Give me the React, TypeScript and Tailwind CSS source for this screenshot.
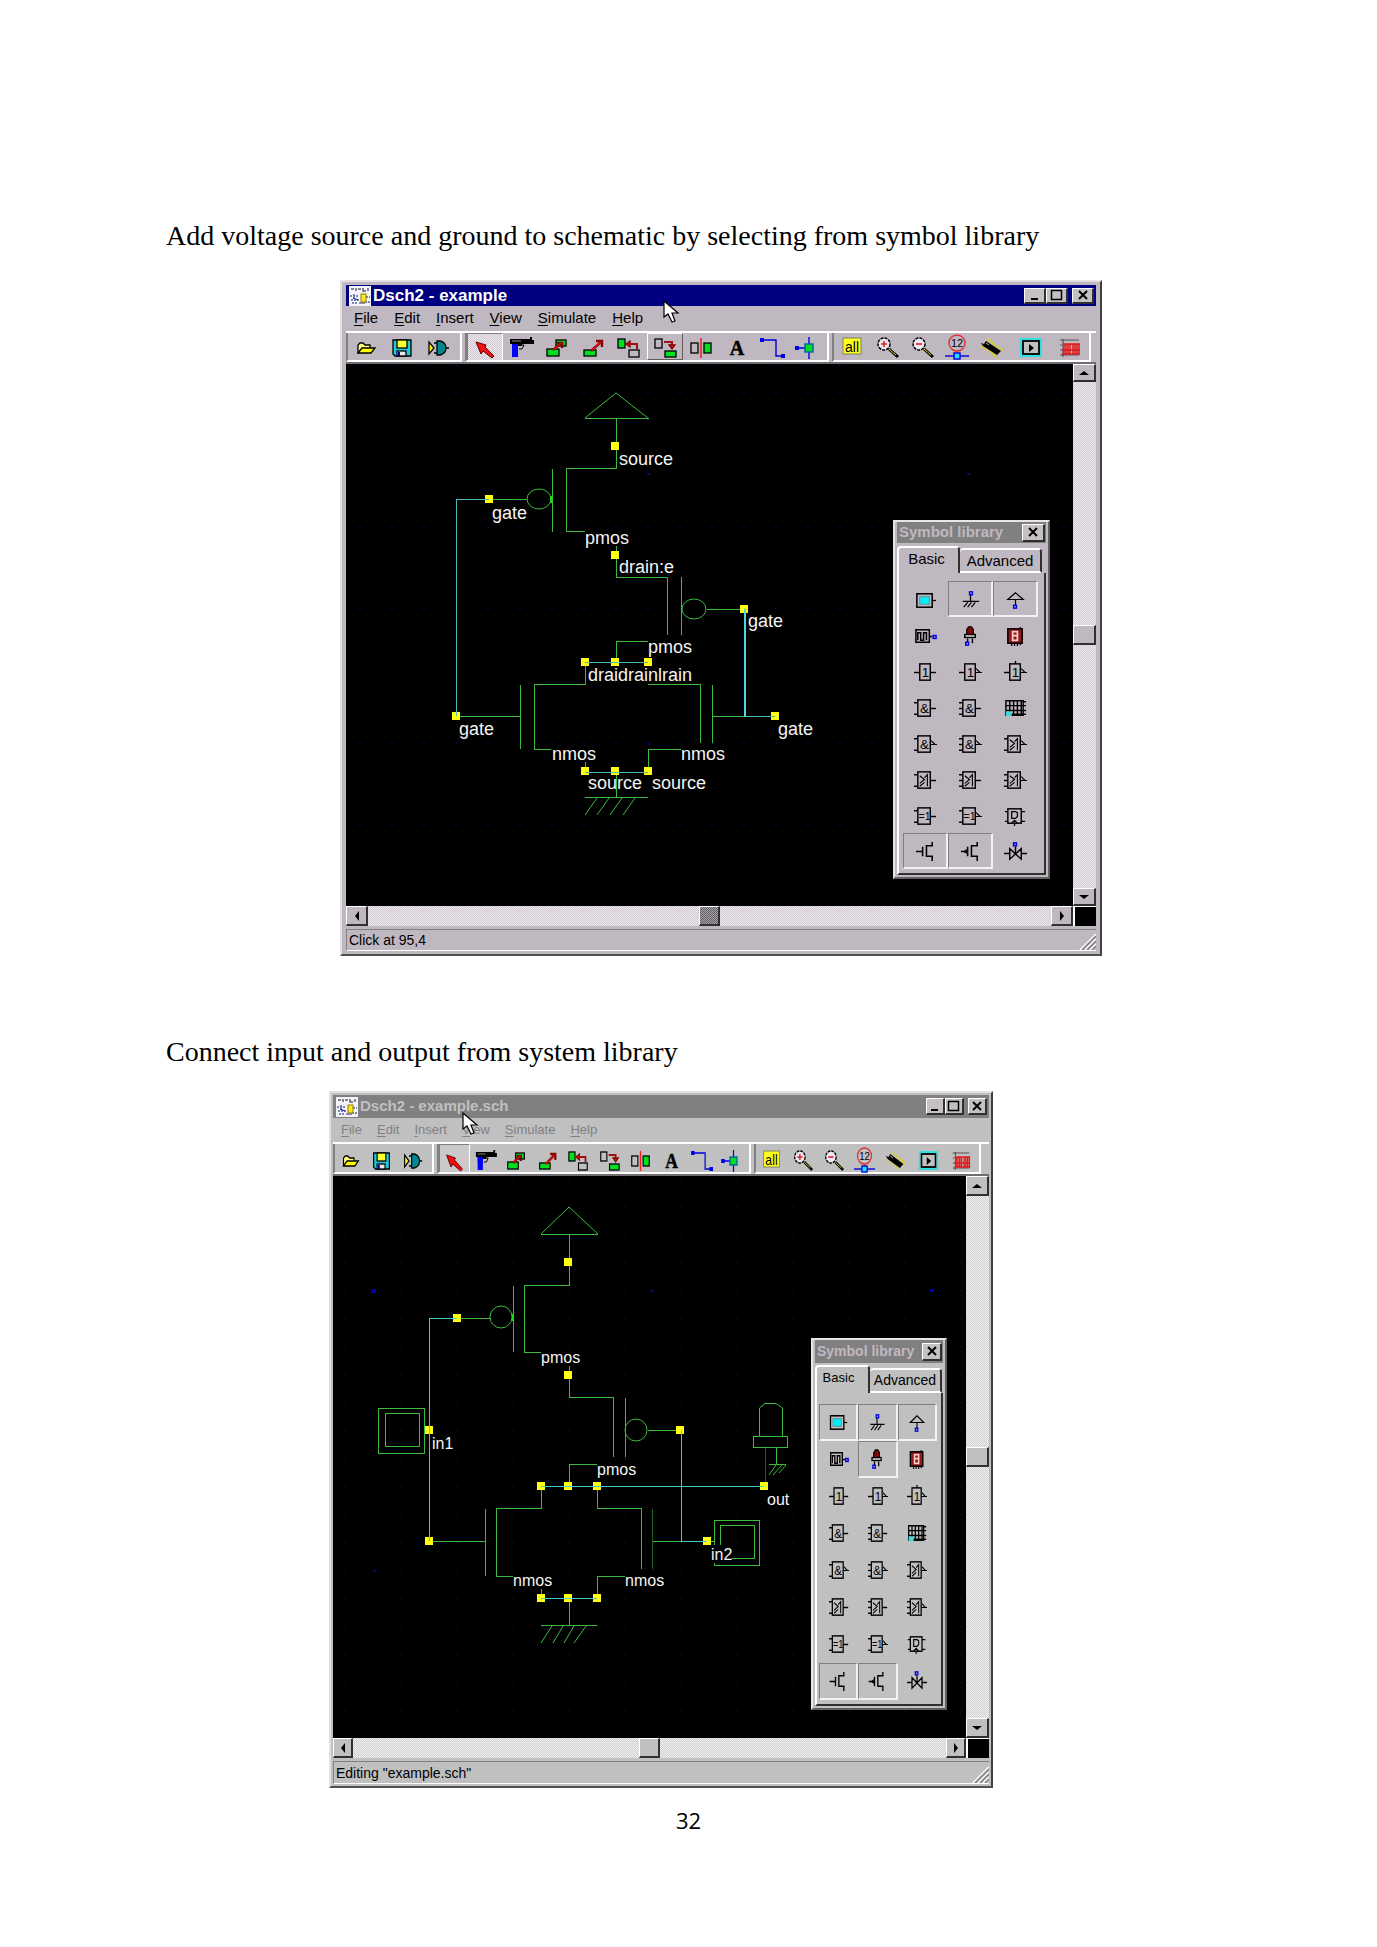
import React from "react";

type Variant = "active" | "inactive";

/* ---------- toolbar drawings ---------- */

const RED = "#d01818";
const GREEN = "#00e020";
const BLUE = "#0000e0";

const toolIcons: Record<string, React.ReactNode> = {
  open: (
    <g stroke="#000" strokeWidth="1.3">
      <path d="M-8 5V-3L-6-5H-3L-1-3H4V0" fill="#ffff80" />
      <path d="M-8 5L-4 0H9L5 5Z" fill="#ffff00" />
    </g>
  ),
  save: (
    <g stroke="#000" strokeWidth="1.3">
      <path d="M-9-8H9V8H-7L-9 6Z" fill="#20c8d8" />
      <rect x="-5" y="-8" width="10" height="8" fill="#ffff30" />
      <rect x="-5" y="3" width="9" height="5" fill="#e8e8e8" />
      <rect x="-4" y="4" width="2" height="4" fill="#008" stroke="none" />
    </g>
  ),
  simulateGate: (
    <g stroke="#000" strokeWidth="1.3">
      <path d="M-9-6L-4 0L-9 6Z" fill="#ffff20" />
      <path d="M-4-5H-1M-4 5H-1M7 0H11" />
      <path d="M-1-7H2C6-6 8-3 8 0C8 3 6 6 2 7H-1Z" fill="#008890" />
    </g>
  ),
  select: <path d="M-9-7L1-4L0-2L9 7L7 9L-2 2L-4 5Z" fill="#f01010" stroke="#600" strokeWidth="1" />,
  gun: (
    <g>
      <path d="M-11-9H9V-11H11V-8H13V-4H1V-2H-3V0H-9V-4H-11Z" fill="#000" />
      <path d="M-3-3H3L1 1H-2" fill="none" stroke="#000" />
      <path d="M-9-4H-3V9H-9Z" fill="#0000ff" />
      <path d="M-9-7H0" stroke="#888" />
    </g>
  ),
  copy: (
    <g stroke="#000" strokeWidth="1.3">
      <rect x="-1" y="-8" width="10" height="6" fill={GREEN} />
      <rect x="-10" y="1" width="12" height="7" fill={GREEN} />
      <path d="M-4 2L4-5M0-5H5V0" stroke="#800" strokeWidth="2.6" fill="none" />
      <path d="M-4 2L4-5" stroke={RED} strokeWidth="1.2" />
    </g>
  ),
  move: (
    <g stroke="#000" strokeWidth="1.3">
      <rect x="-9" y="2" width="12" height="6" fill={GREEN} />
      <path d="M-2 3L8-6M3-7H9V-1" stroke="#800" strokeWidth="2.4" fill="none" />
      <path d="M-2 3L8-6" stroke={RED} strokeWidth="1.2" />
    </g>
  ),
  rotateLeft: (
    <g stroke="#000" strokeWidth="1.3">
      <rect x="-11" y="-9" width="7" height="9" fill={GREEN} />
      <rect x="0" y="2" width="10" height="7" fill="none" />
      <path d="M8 1V-4H0" stroke="#a01010" strokeWidth="2" fill="none" />
      <path d="M-3-4L1-7V-1Z" fill={RED} stroke="#800" />
    </g>
  ),
  rotateRight: (
    <g stroke="#000" strokeWidth="1.3">
      <rect x="-10" y="-9" width="7" height="9" fill="none" />
      <rect x="0" y="3" width="11" height="6" fill={GREEN} />
      <path d="M-1-6H7V-3" stroke="#a01010" strokeWidth="2" fill="none" />
      <path d="M4-3H10L7 1Z" fill={RED} stroke="#800" />
    </g>
  ),
  mirror: (
    <g stroke="#000" strokeWidth="1.3">
      <rect x="-10" y="-5" width="7" height="10" fill="none" />
      <rect x="3" y="-5" width="7" height="10" fill={GREEN} />
      <path d="M0-10V10" stroke="#f02020" strokeWidth="1.6" />
    </g>
  ),
  text: (
    <text x="0" y="7" textAnchor="middle" fontSize="20" fontWeight="700" fontFamily="Liberation Serif, serif" fill="#000" stroke="#000" strokeWidth="0.5">
      A
    </text>
  ),
  wire: (
    <g>
      <path d="M-11-8H3V8H10" fill="none" stroke={BLUE} strokeWidth="1.4" />
      <rect x="-13" y="-10" width="4" height="4" fill={BLUE} />
      <rect x="8" y="6" width="4" height="4" fill={BLUE} />
    </g>
  ),
  node: (
    <g>
      <path d="M-13 0H4M0-11V11" stroke={BLUE} strokeWidth="1.4" />
      <rect x="-14" y="-2" width="4" height="4" fill={BLUE} />
      <rect x="-4" y="-4" width="8" height="8" fill={GREEN} stroke="#0060a0" strokeWidth="1.4" />
    </g>
  ),
  all: (
    <g>
      <rect x="-9" y="-10" width="18" height="16" fill="#ffff20" stroke="#808060" />
      <text x="0" y="4" textAnchor="middle" fontSize="14" fontFamily="Liberation Sans, sans-serif" fill="#000">
        all
      </text>
    </g>
  ),
  zoomIn: (
    <g>
      <path d="M2 1L11 9" stroke="#000" strokeWidth="3" />
      <path d="M2 1L9 7" stroke="#d8d020" strokeWidth="1" />
      <circle cx="-3" cy="-4" r="6" fill="#f0e8f0" stroke="#000" strokeWidth="1.5" strokeDasharray="3 1" />
      <path d="M-6-4H0M-3-7V-1" stroke="#e02020" strokeWidth="1.6" />
    </g>
  ),
  zoomOut: (
    <g>
      <path d="M2 1L11 9" stroke="#000" strokeWidth="3" />
      <path d="M2 1L9 7" stroke="#d8d020" strokeWidth="1" />
      <circle cx="-3" cy="-4" r="6" fill="#f0e8f0" stroke="#000" strokeWidth="1.5" strokeDasharray="3 1" />
      <path d="M-6-4H0" stroke="#e02020" strokeWidth="1.6" />
    </g>
  ),
  probe: (
    <g>
      <circle cx="0" cy="-5" r="8" fill="none" stroke="#e03030" strokeWidth="1.4" />
      <text x="0" y="-1" textAnchor="middle" fontSize="11" fontFamily="Liberation Sans, sans-serif" fill="#000">
        12
      </text>
      <path d="M0 3V6" stroke="#e03030" strokeWidth="1.4" />
      <path d="M-12 8H12" stroke={BLUE} strokeWidth="1.4" />
      <rect x="-3" y="5" width="6" height="6" fill="#20e0ff" stroke={BLUE} strokeWidth="1.4" />
    </g>
  ),
  chip: (
    <g>
      <path d="M-5-9L11 3M-10-2L5 9" stroke="#e0d000" strokeWidth="2.4" strokeDasharray="1.6 1.4" />
      <path d="M-11-5L-8-4L-6-7L9 3L5 7L-9-2Z" fill="#000" />
      <path d="M-6-5L-3-3" stroke="#bbb" />
    </g>
  ),
  play: (
    <g>
      <rect x="-10" y="-9" width="20" height="17" fill="#c0c0c0" stroke="#30e0e0" strokeWidth="2" />
      <rect x="-8" y="-7" width="16" height="13" fill="none" stroke="#000" strokeWidth="1.8" />
      <path d="M-2-4L3 0L-2 4Z" fill="#000" />
    </g>
  ),
  chart: (
    <g>
      <path d="M-7-9V9M-10-8H9M-10-3H-8M-10 2H-8M-10 7H9" stroke="#505050" strokeWidth="1.2" />
      <path d="M-6 6V-4H-4V6M-2 6V-4H0V6M3 6V-4H5V6M7 6V-4H9V6M-8 2H10M-8 6H10M-6-4H10" fill="none" stroke="#e01818" strokeWidth="1.5" />
    </g>
  ),
};

const fileTools = ["open", "save", "simulateGate"];
const editTools = ["select", "gun", "copy", "move", "rotateLeft", "rotateRight", "mirror", "text", "wire", "node"];
const viewTools = ["all", "zoomIn", "zoomOut", "probe", "chip", "play", "chart"];

/* ---------- symbol library drawings ---------- */

function Gate({ label, ins, tri, top }: { label: string; ins: number; tri?: boolean; top?: boolean }) {
  const pins = ins === 1 ? [0] : ins === 2 ? [-6, 6] : [-6, 0, 6];
  const left = label === "1" ? -6 : -8;
  return (
    <g stroke="#000" strokeWidth="1.5" fill="none">
      <rect x={left} y="-9" width={5 - left} height="17" />
      {pins.map((y) => (
        <path key={y} d={`M-12 ${y}H${left}`} />
      ))}
      {tri ? <path d="M6-4L10 0H5M10 0H12" strokeWidth="1.2" /> : <path d="M5 0H11" />}
      {top && <path d="M0-12V-9" />}
      {label === "≥1" ? (
        <path d="M-6-5L-1-1L-6 3M-6 6L-1 2M-1-3L2-6V6" strokeWidth="1.2" />
      ) : (
        <text
          x={label === "1" ? 0 : -1}
          y={label.length > 1 ? 4 : 5}
          textAnchor="middle"
          fontSize={label.length > 1 ? 11 : 14}
          fontFamily="Liberation Sans, sans-serif"
          fill="#000"
          stroke="none"
        >
          {label}
        </text>
      )}
    </g>
  );
}

const thin = { stroke: "#000", strokeWidth: 1.3, fill: "none" };

const symbols: { name: string; art: React.ReactNode }[] = [
  {
    name: "Button",
    art: (
      <g {...thin}>
        <rect x="-9" y="-7" width="16" height="14" strokeWidth="1.6" />
        <rect x="-6" y="-4" width="10" height="8" fill="#00f0ff" stroke="#60a0a0" />
        <path d="M7 0H11" />
      </g>
    ),
  },
  {
    name: "Ground",
    art: (
      <g {...thin}>
        <path d="M0-5V2M-8 2H9M-3 3L-7 8M1 3L-3 8M5 3L1 8" />
        <rect x="-1" y="-8" width="3" height="3" stroke={BLUE} strokeWidth="1.5" />
      </g>
    ),
  },
  {
    name: "Supply",
    art: (
      <g {...thin}>
        <path d="M0-7L-8 0H8ZM0 0V6" />
        <rect x="-2" y="6" width="3" height="3" stroke={BLUE} strokeWidth="1.5" />
      </g>
    ),
  },
  {
    name: "Clock",
    art: (
      <g {...thin}>
        <rect x="-10" y="-7" width="14" height="13" strokeWidth="1.6" />
        <path d="M-8 4V-4H-5V4H-2V-4H1V4M4 0H7" strokeWidth="1.6" />
        <rect x="8" y="-1" width="3" height="3" stroke={BLUE} strokeWidth="1.6" />
      </g>
    ),
  },
  {
    name: "Lamp",
    art: (
      <g {...thin}>
        <path d="M-4-2V-7L-2-10H1L3-7V-2Z" fill="#800808" />
        <rect x="-6" y="-2" width="11" height="3" fill="#e8e8e8" strokeWidth="1.5" />
        <path d="M-3 2V6M2 2V7" strokeWidth="1.5" />
        <rect x="-5" y="6" width="3" height="3" stroke={BLUE} strokeWidth="1.5" />
      </g>
    ),
  },
  {
    name: "Display",
    art: (
      <g {...thin}>
        <rect x="-8" y="-8" width="15" height="15" fill="#981818" strokeWidth="1.6" />
        <path d="M-3-5H2V4H-3ZM-3-1H2" stroke="#f8d0d0" strokeWidth="1.8" />
        <path d="M-4 7V10M-1 7V10M2 7V10M5 7V9M5-10V-8" />
      </g>
    ),
  },
  { name: "Buffer", art: <Gate label="1" ins={1} /> },
  { name: "Inverter", art: <Gate label="1" ins={1} tri /> },
  { name: "Tri-state inverter", art: <Gate label="1" ins={1} tri top /> },
  { name: "And 2", art: <Gate label="&" ins={2} /> },
  { name: "And 3", art: <Gate label="&" ins={3} /> },
  {
    name: "Keyboard",
    art: (
      <g {...thin}>
        <path d="M-10-8H8V7H-10ZM-10-3H11M-10 2H11M-10 6H11M-6-8V7M-2-8V7M2-8V7M6-8V7M8-7H11" strokeWidth="1.5" />
        <rect x="-10" y="3" width="6" height="5" fill="#40d8d8" stroke="none" />
      </g>
    ),
  },
  { name: "Nand 2", art: <Gate label="&" ins={2} tri /> },
  { name: "Nand 3", art: <Gate label="&" ins={3} tri /> },
  { name: "Nor 2", art: <Gate label="≥1" ins={2} tri /> },
  { name: "Or 2", art: <Gate label="≥1" ins={2} /> },
  { name: "Or 3", art: <Gate label="≥1" ins={3} /> },
  { name: "Nor 3", art: <Gate label="≥1" ins={3} tri /> },
  { name: "Xor", art: <Gate label="=1" ins={2} /> },
  { name: "Xnor", art: <Gate label="=1" ins={2} tri /> },
  {
    name: "Latch",
    art: (
      <g {...thin}>
        <rect x="-8" y="-8" width="14" height="15" strokeWidth="1.5" />
        <path d="M-11-5H-8M-11 5H-8M6-5H10M6 5H10M-1 7V10M-4 7L-1 4L2 7M-4-5V2H0L2 0V-4L0-5Z" />
      </g>
    ),
  },
  { name: "Nmos", art: <path d="M-10 0H-3M-3-5V5M7-10V-6H1V5H7V10" {...thin} strokeWidth={1.6} /> },
  {
    name: "Pmos",
    art: (
      <g {...thin} strokeWidth={1.6}>
        <path d="M-10 0H-3M-3-5V5M7-10V-6H1V5H7V10" />
        <path d="M-7 0L-4-2V2Z" strokeWidth={1} />
      </g>
    ),
  },
  {
    name: "Transmission gate",
    art: (
      <g {...thin} strokeWidth={1.5}>
        <path d="M-12 1H-6M6 1H12M-6-4V7L6-4V7ZM0-6V1" />
        <rect x="-2" y="-10" width="3" height="3" stroke={BLUE} strokeWidth="1.6" />
      </g>
    ),
  },
];

/* ---------- schematics ---------- */

const G = "#3cba3c";
const C = "#48b8b8";

function Pins({ at }: { at: [number, number][] }) {
  return (
    <g fill="#ffff10">
      {at.map(([x, y]) => (
        <rect key={`${x}-${y}`} x={x - 4} y={y - 4} width="8" height="8" />
      ))}
    </g>
  );
}

function GateSchematic() {
  return (
    <svg width="726" height="542" viewBox="0 0 726 542" className="block" role="img" aria-label="Gate schematic with supply and ground">
      <defs>
        <pattern id="grid-a" x="13" y="1" width="32" height="27" patternUnits="userSpaceOnUse">
          <rect width="2" height="1" fill="#10107a" />
        </pattern>
      </defs>
      <rect width="726" height="542" fill="url(#grid-a)" />
      <g fill="#0000a0">
        <rect x="301" y="109" width="3" height="2" />
        <rect x="621" y="109" width="3" height="2" />
        <rect x="301" y="379" width="3" height="2" />
      </g>
      <g fill="none" stroke={G} shapeRendering="crispEdges">
        <path d="M270.5 54V104.5H220.5V167.5H239M239 54.5H303M206.5 105V168M143 135.5H181" />
        <path d="M270.5 182V213.5H321.5V271M335.5 213V271M361 245.5H398M302 277.5H270.5V298" />
        <path d="M239.5 298V320.5H188.5V385.5H205M174.5 321V385M110 352.5H174" />
        <path d="M302 320.5H354.5V379M366.5 321V379M366 352.5H399M302.5 407V385.5H335M239.5 398V408" />
        <path d="M270.5 408V433M239 433.5H302" />
      </g>
      <g fill="none" stroke={G}>
        <path d="M239 54L270 29L302 54M251 434L239 451M263 434L251 451M276 434L264 451M289 434L277 451" />
        <ellipse cx="193" cy="135" rx="12" ry="10" />
        <ellipse cx="348" cy="245" rx="12" ry="10" />
      </g>
      <rect x="204" y="132" width="2" height="7" fill="#10e010" />
      <Pins at={[[269, 82], [143, 135], [110, 352], [269, 191], [398, 245], [239, 298], [269, 298], [302, 298], [429, 352], [239, 407], [269, 407], [302, 407]]} />
      <g fill="none" stroke={C} shapeRendering="crispEdges">
        <path d="M143 135.5H110.5V352M239 298.5H302M399 352.5H429M239 408.5H302" />
        <path d="M399 245V353" stroke="#48d8e0" strokeWidth="2" />
      </g>
      <g fill="#f4f4f4" fontFamily="Liberation Sans, Arial, sans-serif" fontSize="18">
        <text x="273" y="101">source</text>
        <text x="146" y="155">gate</text>
        <text x="239" y="180">pmos</text>
        <text x="273" y="209">drain:e</text>
        <text x="402" y="263">gate</text>
        <text x="302" y="289">pmos</text>
        <text x="242" y="317">draidrainlrain</text>
        <text x="113" y="371">gate</text>
        <text x="432" y="371">gate</text>
        <text x="206" y="396">nmos</text>
        <text x="335" y="396">nmos</text>
        <text x="242" y="425">source</text>
        <text x="306" y="425">source</text>
      </g>
      <path d="M270.5 411V433" stroke={G} shapeRendering="crispEdges" />
    </svg>
  );
}

function IoSchematic() {
  return (
    <svg width="633" height="562" viewBox="0 0 633 562" className="block" role="img" aria-label="Gate schematic with inputs and output">
      <defs>
        <pattern id="grid-b" x="12" y="2" width="28" height="28" patternUnits="userSpaceOnUse">
          <rect width="1" height="1" fill="#1818a0" />
        </pattern>
      </defs>
      <rect width="633" height="562" fill="url(#grid-b)" />
      <g fill="#0000a8">
        <rect x="38" y="113" width="5" height="4" />
        <rect x="318" y="114" width="3" height="2" />
        <rect x="597" y="113" width="3" height="3" />
        <rect x="40" y="394" width="3" height="2" />
      </g>
      <g fill="none" stroke={G} shapeRendering="crispEdges">
        <path d="M236.5 58V109.5H191.5V176.5H208M208 58.5H265M180.5 110V176M124 142.5H158" />
        <path d="M236.5 190V221.5H280.5V281M292.5 222V281M315 254.5H347M264 288.5H236.5V310" />
        <path d="M208.5 310V332.5H163.5V400.5H180M152.5 333V400M96 365.5H152" />
        <path d="M264.5 310V332.5H308.5V393M319 365.5H348M264.5 422V400.5H292M208.5 413V422M236.5 422V449M208 449.5H264" />
        <path d="M319.5 333V393M432.5 271V306" stroke="#1c6420" />
        <path d="M45.5 232.5H91.5V277.5H45.5ZM52.5 237.5H86.5V270.5H52.5ZM91 254.5H96" />
        <path d="M381.5 344.5H426.5V389.5H381.5ZM387.5 349.5H421.5V382.5H387.5ZM374 365.5H381" />
        <path d="M420.5 260.5H454.5V271.5H420.5ZM443.5 271V288M436 288.5H453M426.5 260V232M449.5 260V232" />
      </g>
      <g fill="none" stroke={G}>
        <path d="M208 58L236 31L265 58M219 450L208 467M230 450L220 467M241 450L231 467M253 450L241 467" />
        <path d="M426.5 232L432 227.5H443L449.5 232M443 289L436 299M449 289L440 299M453 289L446 297" />
        <circle cx="168" cy="141" r="11" />
        <circle cx="303" cy="254" r="11" />
      </g>
      <rect x="179" y="138" width="2" height="7" fill="#10e010" />
      <Pins at={[[235, 86], [124, 142], [96, 254], [96, 365], [235, 199], [347, 254], [374, 365], [208, 310], [235, 310], [264, 310], [431, 310], [208, 422], [235, 422], [264, 422]]} />
      <path d="M124 142.5H96.5V365M348.5 254V365.5H374M208 310.5H431M208 422.5H264" fill="none" stroke="#48c8c8" shapeRendering="crispEdges" />
      <g fill="#f4f4f4" fontFamily="Liberation Sans, Arial, sans-serif" fontSize="16">
        <text x="208" y="187">pmos</text>
        <text x="264" y="299">pmos</text>
        <text x="99" y="273">in1</text>
        <text x="180" y="410">nmos</text>
        <text x="292" y="410">nmos</text>
        <text x="434" y="329">out</text>
        <rect x="378" y="369" width="21" height="18" fill="#000" />
        <text x="378" y="384">in2</text>
      </g>
    </svg>
  );
}

/* ---------- window parts ---------- */

const themes = {
  active: {
    face: "bg-[#c0b8c0]",
    frame: "ml-[174px] w-[762px] px-1 py-[3px]",
    title: "h-[21px] bg-[#000080] text-white",
    titleText: "text-[17px]",
    menu: "h-[25px] gap-4 text-[15px] text-black",
    bar: "h-[33px]",
    tool: "w-9 pt-[3px]",
    viewTool: "w-[35px] pt-[3px]",
    icon: 24,
    gap: "ml-1",
    vbar: "w-[23px]",
    vEnd: "h-[18px]",
    hEnd: "w-[22px]",
    thumb: "bg-[repeating-conic-gradient(#606060_0_25%,#a8a0a8_0_50%)] bg-[length:2px_2px]",
    track: "bg-[repeating-conic-gradient(#f0e8f0_0_25%,#d0c8d0_0_50%)] bg-[length:2px_2px]",
    caption: "w-[22px] h-4",
    status: "h-[22px]",
    lib: "left-[547px] top-[156px] w-[157px] h-[359px]",
    libTitle: "h-[21px]",
    libText: "text-[15px]",
    libClose: "w-[23px]",
    cell: "h-9 pt-[2px]",
    libPad: "pr-[6px] pl-[4px] pt-2",
    tabs: "pt-[3px] h-[30px]",
    basicTab: "w-[63px] pr-1 text-[15px]",
    advTab: "w-[82px] text-[15px]",
    cursor: "left-[321px] top-[18px]",
  },
  inactive: {
    face: "bg-[#c0c0c0]",
    frame: "ml-[163px] w-[664px] p-[2px]",
    title: "h-[23px] bg-[#808080] text-[#c0c0c0]",
    titleText: "text-[15px]",
    menu: "h-6 gap-[15px] text-[13px] text-[#808080]",
    bar: "h-[34px]",
    tool: "w-[31px] pt-[6px]",
    viewTool: "w-[31px] pt-[6px]",
    icon: 21,
    gap: "ml-[2px]",
    vbar: "w-[23px]",
    vEnd: "h-[20px]",
    hEnd: "w-[20px]",
    thumb: "bg-[#c0c0c0]",
    track: "bg-[repeating-conic-gradient(#f0f0f0_0_25%,#cecece_0_50%)] bg-[length:2px_2px]",
    caption: "w-[19px] h-[17px]",
    status: "h-[23px]",
    lib: "left-[478px] top-[162px] w-[136px] h-[372px]",
    libTitle: "h-[23px]",
    libText: "text-[14px]",
    libClose: "w-[20px]",
    cell: "h-[37px]",
    libPad: "pr-1 pl-[2px] pt-[11px]",
    tabs: "pt-[2px] h-[30px]",
    basicTab: "w-[55px] pr-2 text-[13px]",
    advTab: "w-[72px] text-[14px]",
    cursor: "left-[131px] top-[19px]",
  },
};

const raised = "border-t border-l border-r-2 border-b-2 border-t-white border-l-white border-r-[#303030] border-b-[#303030]";

function Glyph({ kind }: { kind: "min" | "max" | "close" }) {
  return (
    <svg width="14" height="12" viewBox="0 0 14 12" fill="none" stroke="#000" aria-hidden="true">
      {kind === "min" && <path d="M3 10H10" strokeWidth="2" />}
      {kind === "max" && <path d="M1 1.5H12M1.5 1V10.5H11.5V1" strokeWidth="1.5" />}
      {kind === "close" && <path d="M3 2L11 10M11 2L3 10" strokeWidth="2" />}
    </svg>
  );
}

function CaptionButton({ kind, label, className }: { kind: "min" | "max" | "close"; label: string; className: string }) {
  return (
    <button aria-label={label} className={`flex shrink-0 items-center justify-center overflow-hidden bg-[#c4c0c4] ${raised} ${className}`}>
      <Glyph kind={kind} />
    </button>
  );
}

function Arrow({ d }: { d: string }) {
  return (
    <svg width="10" height="10" viewBox="0 0 10 10" aria-hidden="true">
      <path d={d} fill="#000" />
    </svg>
  );
}

function ToolGroup({ tools, variant }: { tools: string[]; variant: Variant }) {
  const t = themes[variant];
  const isView = tools === viewTools;
  const pad = tools === fileTools ? "pr-1" : isView ? "pr-[2px]" : "";
  return (
    <div className={`mr-[3px] flex h-full border-r-2 border-b-2 border-l-2 border-r-white border-b-white border-l-[#808080] ${pad}`}>
      {tools.map((name) => {
        const pressed = name === "select";
        const hot = name === "rotateRight" && variant === "active";
        return (
          <button
            key={name}
            aria-label={name}
            className={`flex items-center justify-center ${isView ? t.viewTool : t.tool} ${name === "play" || name === "chart" ? t.gap : ""} ${
              pressed
                ? `border-t border-l border-r border-t-[#808080] border-l-[#808080] border-r-white ${variant === "active" ? t.track : "bg-[#cacaca]"}`
                : ""
            } ${hot ? "border border-t-white border-r-[#606060] border-b-[#606060] border-l-white" : ""}`}
          >
            <svg width={t.icon} height="24" viewBox="-12 -12 24 24" preserveAspectRatio="none" overflow="visible" className="shrink-0" aria-hidden="true">
              {toolIcons[name]}
            </svg>
          </button>
        );
      })}
    </div>
  );
}

function SymbolLibrary({ variant, used }: { variant: Variant; used: string[] }) {
  const t = themes[variant];
  return (
    <section
      aria-label="Symbol library"
      className={`absolute flex flex-col border-2 border-t-[#e8e4e8] border-r-[#606060] border-b-[#606060] border-l-[#e8e4e8] px-[2px] ${t.face} ${t.lib}`}
    >
      <div className={`flex shrink-0 items-center justify-between bg-[#808080] pr-px pl-[2px] ${t.libTitle}`}>
        <span className={`font-bold whitespace-nowrap text-[#c0b8c0] ${t.libText}`}>Symbol library</span>
        <CaptionButton kind="close" label="Close library" className={`h-[18px] ${t.libClose}`} />
      </div>
      <div role="tablist" className={`flex shrink-0 items-end ${t.tabs}`}>
        <button role="tab" aria-selected="true" className={`h-full rounded-t-sm border-t-2 border-r-2 border-l-2 border-t-white border-r-[#303030] border-l-white pb-1 ${t.basicTab}`}>
          Basic
        </button>
        <button role="tab" aria-selected="false" className={`h-[25px] rounded-t-sm border-t-2 border-r-2 border-b-2 border-t-white border-r-[#303030] border-b-white ${t.advTab}`}>
          Advanced
        </button>
      </div>
      <div className={`mb-[2px] grid flex-1 grid-cols-3 content-start border-r-2 border-b-2 border-l-2 border-r-[#303030] border-b-[#303030] border-l-white ${t.libPad}`}>
        {symbols.map(({ name, art }) => (
          <button
            key={name}
            aria-label={name}
            className={`flex items-center justify-center ${t.cell} ${
              used.includes(name) ? "border-t border-r-2 border-b-2 border-l border-t-[#808080] border-r-[#f4f0f4] border-b-[#f4f0f4] border-l-[#808080]" : ""
            }`}
          >
            <svg width={variant === "active" ? 23 : 20} height="23" viewBox="-12 -12 24 24" preserveAspectRatio="none" overflow="visible" className="shrink-0" aria-hidden="true">
              {art}
            </svg>
          </button>
        ))}
      </div>
    </section>
  );
}

function DschWindow({
  variant,
  title,
  status,
  used,
  children,
}: {
  variant: Variant;
  title: string;
  status: string;
  used: string[];
  children: React.ReactNode;
}) {
  const t = themes[variant];
  const endButton = `flex shrink-0 items-center justify-center ${t.face} ${raised}`;
  return (
    <div
      className={`relative border-2 border-t-[#e4e0e4] border-r-[#404040] border-b-[#505050] border-l-[#e4e0e4] font-['Liberation_Sans',Arial,sans-serif] text-black ${t.face} ${t.frame}`}
    >
      <header className={`flex items-center ${t.title}`}>
        <svg width="24" height="20" viewBox="0 0 24 20" className="ml-[3px] shrink-0" aria-hidden="true">
          <rect width="22" height="20" fill="#f4f4f8" />
          <path d="M2 3H5M7 2V5M9 3H12M14 2V5H17M19 2V5" stroke="#606070" strokeWidth="1.5" fill="none" />
          <path d="M1 10H9M2 14H10M3 17H9M17 11H21M16 16H21M5 8V13" stroke="#5060a0" strokeWidth="1.4" strokeDasharray="2 1" />
          <path d="M10 17H16M4 12L9 14" stroke="#202080" />
          <rect x="12" y="8" width="5" height="8" fill="#ffe818" stroke="#908010" />
        </svg>
        <h2 className={`grow font-bold whitespace-pre ${t.titleText}`}>{title}</h2>
        <CaptionButton kind="min" label="Minimize" className={t.caption} />
        <CaptionButton kind="max" label="Maximize" className={t.caption} />
        <CaptionButton kind="close" label="Close" className={`mr-[2px] ml-1 ${t.caption}`} />
      </header>

      <nav className={`flex items-center px-2 ${t.menu}`}>
        {["File", "Edit", "Insert", "View", "Simulate", "Help"].map((item) => (
          <button key={item}>
            <span className="underline underline-offset-2">{item[0]}</span>
            {item.slice(1)}
          </button>
        ))}
      </nav>

      <div className={`flex border-t-2 border-b-2 border-t-white border-b-[#706c70] ${t.bar}`}>
        <ToolGroup tools={fileTools} variant={variant} />
        <ToolGroup tools={editTools} variant={variant} />
        <ToolGroup tools={viewTools} variant={variant} />
      </div>

      <div className="flex">
        <div className="relative min-w-0 flex-1 overflow-hidden bg-black">
          {children}
          <SymbolLibrary variant={variant} used={used} />
        </div>
        <div className={`flex flex-col justify-between ${t.vbar} ${t.track}`}>
          <button aria-label="Scroll up" className={`${endButton} ${t.vEnd}`}>
            <Arrow d="M0 7L5 3L10 7Z" />
          </button>
          <div className={`h-5 ${t.face} ${raised}`} />
          <button aria-label="Scroll down" className={`${endButton} ${t.vEnd}`}>
            <Arrow d="M0 3L5 7L10 3Z" />
          </button>
        </div>
      </div>

      <div className="flex h-5">
        <div className={`flex flex-1 justify-between ${t.track}`}>
          <button aria-label="Scroll left" className={`${endButton} ${t.hEnd}`}>
            <Arrow d="M7 0L3 5L7 10Z" />
          </button>
          <div className={`w-[21px] ${t.thumb} ${raised}`} />
          <button aria-label="Scroll right" className={`${endButton} ${t.hEnd}`}>
            <Arrow d="M3 0L7 5L3 10Z" />
          </button>
        </div>
        <div className={`border-t border-l-2 border-white bg-black ${t.vbar}`} />
      </div>

      <footer className={`mt-[3px] flex items-end justify-between border-t border-b border-l border-t-[#808080] border-b-white border-l-[#808080] pl-[2px] ${t.status}`}>
        <span className="self-center text-[14px] leading-5">{status}</span>
        <svg width="18" height="18" viewBox="0 0 18 18" fill="none" strokeWidth="1.5" aria-hidden="true">
          <path d="M2 18L18 2M7 18L18 7M12 18L18 12" stroke="#fff" />
          <path d="M4 18L18 4M9 18L18 9M14 18L18 14" stroke="#808080" />
        </svg>
      </footer>

      <svg width="17" height="24" viewBox="0 0 17 24" className={`absolute ${t.cursor}`} aria-hidden="true">
        <path d="M1 1V17L5 14L9 22L12 21L9 13H15Z" fill="#fff" stroke="#000" strokeWidth="1.2" />
      </svg>
    </div>
  );
}

export default function App() {
  return (
    <main className="min-h-screen bg-white px-[166px] pt-[220px] pb-20 text-black">
      <p className="mb-7 font-['Liberation_Serif','Times_New_Roman',serif] text-[28px] leading-8 whitespace-nowrap">
        Add voltage source and ground to schematic by selecting from symbol library
      </p>
      <DschWindow variant="active" title="Dsch2 - example" status="Click at 95,4" used={["Ground", "Supply", "Nmos", "Pmos"]}>
        <GateSchematic />
      </DschWindow>

      <p className="mt-20 mb-[23px] font-['Liberation_Serif','Times_New_Roman',serif] text-[28px] leading-8 whitespace-nowrap">
        Connect input and output from system library
      </p>
      <DschWindow
        variant="inactive"
        title="Dsch2 - example.sch"
        status={'Editing "example.sch"'}
        used={["Button", "Ground", "Supply", "Lamp", "Nmos", "Pmos"]}
      >
        <IoSchematic />
      </DschWindow>

      <footer className="mt-4 text-center font-['Open_Sans',sans-serif] text-[22px] leading-8">32</footer>
    </main>
  );
}
